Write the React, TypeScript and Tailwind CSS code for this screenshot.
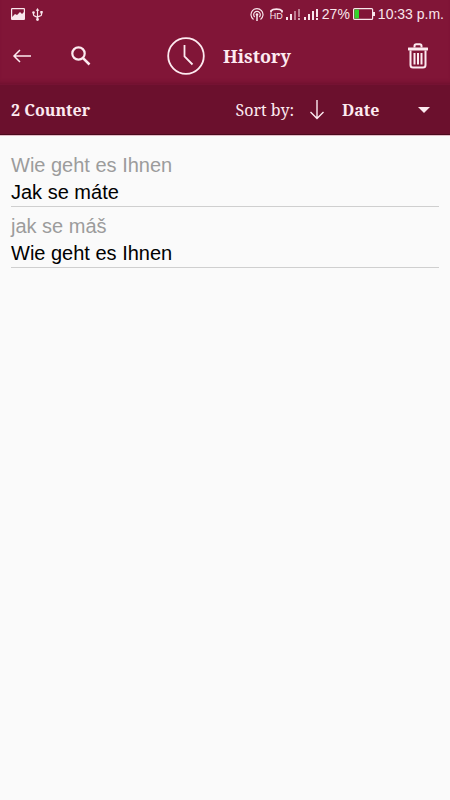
import type { ReactNode } from 'react';

type Entry = { id: number; source: string; target: string };

const entries: Entry[] = [
  { id: 1, source: 'Wie geht es Ihnen', target: 'Jak se máte' },
  { id: 2, source: 'jak se máš', target: 'Wie geht es Ihnen' },
];

const SignalBars = ({ faded = false }: { faded?: boolean }) => (
  <svg width="14" height="11" viewBox="0 0 14 11" fill="currentColor">
    <rect x="0" y="8" width="2" height="3" />
    <rect x="4" y="5" width="2" height="6" />
    <rect x="8" y="2" width="2" height="9" opacity={faded ? 0.5 : 1} />
    <rect x="12" y="0" width="2" height="8" opacity={faded ? 0.5 : 1} />
    <rect x="12" y="9" width="2" height="2" opacity={faded ? 0.7 : 1} />
  </svg>
);

const StatusBar = () => (
  <div className="flex h-7 items-center justify-between pl-[11px] pr-[6px] text-[#f9e6ec]">
    <div className="flex items-center gap-[7px]">
      {/* Picture */}
      <svg width="14" height="12" viewBox="0 0 14 12" fill="none">
        <rect x="0.6" y="0.6" width="12.8" height="10.8" rx="0.5" stroke="currentColor" strokeWidth="1.2" />
        <path d="M1 11V9l3-3 2 1 3-3 2 2 2-2v7z" fill="currentColor" />
      </svg>
      {/* USB */}
      <svg width="11" height="13" viewBox="0 0 11 13" fill="none" stroke="currentColor" strokeWidth="1.2">
        <path d="M5.5 2v9M1.5 5v2c0 1.3 4 1.5 4 3M9.5 4v3c0 1.3-4 1-4 2.5" />
        <path d="M5.5 0L7.3 2.8H3.7z" fill="currentColor" stroke="none" />
        <circle cx="5.5" cy="11.5" r="1.4" fill="currentColor" stroke="none" />
        <circle cx="1.5" cy="4.5" r="1.3" fill="currentColor" stroke="none" />
        <path d="M8.3 3h2.4v2.4H8.3z" fill="currentColor" stroke="none" />
      </svg>
    </div>

    <div className="flex items-center font-['Liberation_Sans',Arial,sans-serif] text-sm leading-5">
      {/* Hotspot */}
      <svg className="mr-[6px]" width="14" height="13" viewBox="0 0 14 13" fill="none" stroke="currentColor" strokeWidth="1.2">
        <path d="M3.5 11.5A6 6 0 1 1 10.5 11.5M4.7 9A3.3 3.3 0 1 1 9.3 9" />
        <path d="M7 6v7" strokeWidth="1.5" />
        <circle cx="7" cy="6.5" r="1.3" fill="currentColor" stroke="none" />
      </svg>
      {/* HD call */}
      <span className="mr-[3px] flex w-[13px] flex-col items-center">
        <svg width="13" height="5" viewBox="0 0 13 5" fill="none" stroke="currentColor" strokeWidth="1.8">
          <path d="M1 4.5V2.8c2-2.3 9-2.3 11 0v1.7" />
        </svg>
        <span className="text-[9px] leading-[7px]">HD</span>
      </span>
      <SignalBars faded />
      <span className="mx-[4px] flex">
        <SignalBars />
      </span>
      <span>27%</span>
      <svg className="mx-[3px]" width="22" height="12" viewBox="0 0 22 12">
        <rect x="0.6" y="0.6" width="19" height="10.8" rx="1" fill="none" stroke="currentColor" strokeWidth="1.2" />
        <rect x="20" y="4" width="2" height="4" fill="currentColor" />
        <rect x="1.5" y="1.5" width="4.5" height="9" fill="#35d52c" />
      </svg>
      <span>10:33 p.m.</span>
    </div>
  </div>
);

const IconButton = ({ label, className, children }: { label: string; className: string; children: ReactNode }) => (
  <button type="button" aria-label={label} className={`flex shrink-0 items-center justify-center ${className}`}>
    {children}
  </button>
);

const Toolbar = () => (
  <header className="flex h-14 items-center pl-[12px] pr-[20px] text-[#fdeaf0]">
    <IconButton label="Back" className="h-10 w-5">
      <svg width="20" height="14" viewBox="0 0 20 14" fill="none" stroke="currentColor" strokeWidth="1.5">
        <path d="M19 7H2M8 1L2 7l6 6" />
      </svg>
    </IconButton>
    <IconButton label="Search" className="ml-[39px] h-10 w-5">
      <svg width="20" height="20" viewBox="0 0 20 20" fill="none" stroke="currentColor">
        <circle cx="7.5" cy="7.5" r="6.2" strokeWidth="2.2" />
        <path d="M11.8 11.8L18.5 18.5" strokeWidth="2.5" />
      </svg>
    </IconButton>
    <svg className="ml-[76px] shrink-0" width="38" height="38" viewBox="0 0 38 38" fill="none" stroke="currentColor">
      <circle cx="19" cy="19" r="17.8" strokeWidth="1.8" />
      <path d="M17.500 8v11.500l8 8" strokeWidth="1.8" />
    </svg>
    <h1 className="ml-[18px] text-lg font-bold leading-6">History</h1>
    <IconButton label="Delete history" className="ml-auto h-10 w-6">
      <svg className="shrink-0" width="20" height="26" viewBox="0 0 20 26" fill="none" stroke="currentColor" strokeWidth="2">
        <path d="M6.500 4.500V3c0-1.200.8-1.700 1.700-1.700h3.600c.9 0 1.700.5 1.700 1.700v1.500" />
        <path d="M0.500 6h19" strokeWidth="2.800" strokeLinecap="round" />
        <path d="M2.500 7.500V22c0 1.700 1 2.500 2.500 2.500h10c1.500 0 2.500-.8 2.500-2.500V7.500" />
        <path d="M6.500 10v11.500M10 10v11.500M13.500 10v11.500" />
      </svg>
    </IconButton>
  </header>
);

const SortBar = () => (
  <div className="flex h-[50px] items-center border-b border-[#4b0a1d] bg-[#6b102d] px-[11px] text-base text-[#fdeaf0] shadow-[0_1px_0_#e3bcc8]">
    <span className="font-bold">2 Counter</span>
    <label htmlFor="sort" className="ml-auto">
      Sort by:
    </label>
    <IconButton label="Sort descending" className="ml-[14px] h-10 w-[18px]">
      <svg width="16" height="20" viewBox="0 0 16 20" fill="none" stroke="currentColor" strokeWidth="1.4">
        <path d="M8 0v18.5M1.5 12L8 18.5l6.5-6.5" />
      </svg>
    </IconButton>
    <div className="relative ml-[16px] w-[97px]">
      <select id="sort" className="w-full appearance-none bg-transparent font-bold">
        <option>Date</option>
        <option>Name</option>
      </select>
      <svg className="pointer-events-none absolute right-[9px] top-1/2 -translate-y-1/2" width="12" height="6" viewBox="0 0 12 6">
        <path d="M0 0h12L6 6z" fill="currentColor" />
      </svg>
    </div>
  </div>
);

const App = () => (
  <div className="min-h-screen bg-[#fafafa] font-['Noto_Serif','Droid_Serif','Liberation_Serif',serif]">
    <div className="border-b border-[#751233] bg-[#811537] shadow-[inset_0_-4px_4px_-3px_#6b102d]">
      <StatusBar />
      <Toolbar />
    </div>
    <SortBar />
    <ul className="px-[11px] pt-[17px] font-['Liberation_Sans',Arial,sans-serif] text-xl leading-[27px]">
      {entries.map((entry) => (
        <li key={entry.id} className="mb-[6px] border-b border-[#cfcfcf]">
          <p className="text-[#9c9c9c]">{entry.source}</p>
          <p className="text-black">{entry.target}</p>
        </li>
      ))}
    </ul>
  </div>
);

export default App;
